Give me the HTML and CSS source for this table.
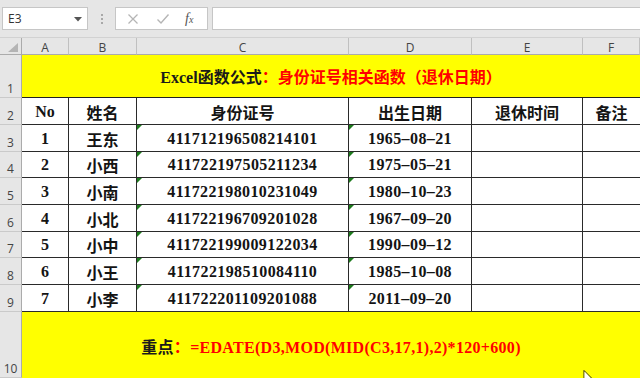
FILE: index.html
```html
<!DOCTYPE html>
<html>
<head>
<meta charset="utf-8">
<link rel="stylesheet" href="styles.css">
</head>
<body>
<div class="app">
  <div class="toolbar">
    <div class="namebox"><span class="nb-text">E3</span><svg class="caret" width="8" height="5" viewBox="0 0 8 5"><polygon points="0,0 8,0 4,4.5" fill="#555"/></svg></div>
    <div class="dots"><i></i><i></i><i></i></div>
    <div class="fxbox">
      <svg width="12" height="12" viewBox="0 0 12 12"><path d="M1.5 1.5 L10.5 10.5 M10.5 1.5 L1.5 10.5" stroke="#b5b5b5" stroke-width="1.3" fill="none"/></svg>
      <svg width="14" height="12" viewBox="0 0 14 12"><path d="M1.5 6.5 L5 10 L12.5 1.5" stroke="#b5b5b5" stroke-width="1.4" fill="none"/></svg>
      <span class="fx"><i>f</i><span class="fxx">x</span></span>
    </div>
    <div class="formula"></div>
  </div>
  <div class="sheet">
    <div class="corner"><svg width="10" height="9" viewBox="0 0 10 9"><polygon points="10,0 10,9 0,9" fill="#b4b4b4"/></svg></div>
    <div class="colh">A</div><div class="colh">B</div><div class="colh">C</div><div class="colh">D</div><div class="colh">E</div><div class="colh">F</div>

    <div class="rowh">1</div>
    <div class="banner title"><span class="blk">Excel函数公式</span><span class="red">：身份证号相关函数（退休日期）</span></div>

    <div class="rowh">2</div>
    <div class="cell">No</div><div class="cell">姓名</div><div class="cell">身份证号</div><div class="cell">出生日期</div><div class="cell">退休时间</div><div class="cell last">备注</div>

    <div class="rowh">3</div>
    <div class="cell">1</div><div class="cell">王东</div><div class="cell tri num">411712196508214101</div><div class="cell tri num">1965–08–21</div><div class="cell"></div><div class="cell last"></div>

    <div class="rowh">4</div>
    <div class="cell">2</div><div class="cell">小西</div><div class="cell tri num">411722197505211234</div><div class="cell tri num">1975–05–21</div><div class="cell"></div><div class="cell last"></div>

    <div class="rowh">5</div>
    <div class="cell">3</div><div class="cell">小南</div><div class="cell tri num">411722198010231049</div><div class="cell tri num">1980–10–23</div><div class="cell"></div><div class="cell last"></div>

    <div class="rowh">6</div>
    <div class="cell">4</div><div class="cell">小北</div><div class="cell tri num">411722196709201028</div><div class="cell tri num">1967–09–20</div><div class="cell"></div><div class="cell last"></div>

    <div class="rowh">7</div>
    <div class="cell">5</div><div class="cell">小中</div><div class="cell tri num">411722199009122034</div><div class="cell tri num">1990–09–12</div><div class="cell"></div><div class="cell last"></div>

    <div class="rowh">8</div>
    <div class="cell">6</div><div class="cell">小王</div><div class="cell tri num">411722198510084110</div><div class="cell tri num">1985–10–08</div><div class="cell"></div><div class="cell last"></div>

    <div class="rowh">9</div>
    <div class="cell">7</div><div class="cell">小李</div><div class="cell tri num">411722201109201088</div><div class="cell tri num">2011–09–20</div><div class="cell"></div><div class="cell last"></div>

    <div class="rowh">10</div>
    <div class="banner note"><span class="blk">重点</span><span class="red">：=EDATE(D3,MOD(MID(C3,17,1),2)*120+600)</span></div>
  </div>
  <svg class="cursor" width="12" height="10" viewBox="0 0 12 10"><path d="M1 0.5 L1 10 M1 0.5 L9 8.5" stroke="#222" stroke-width="1" fill="none"/><polygon points="1.5,1.5 1.5,10 8,8.5" fill="#fff"/></svg>
</div>
</body>
</html>
```

FILE: styles.css
```css
* { box-sizing: border-box; }
html, body { margin: 0; padding: 0; }
body {
  width: 640px;
  height: 378px;
  overflow: hidden;
  background: #ffffff;
  font-family: "Open Sans", "Noto Sans", sans-serif;
}
.app { position: relative; width: 640px; height: 378px; overflow: hidden; }

.toolbar {
  height: 38px;
  background: #e6e6e6;
  border-bottom: 1px solid #d2d2d2;
  display: flex;
  align-items: flex-start;
  padding-top: 7px;
}
.namebox {
  margin-left: 2px;
  width: 86px;
  height: 23px;
  background: #fff;
  border: 1px solid #c6c6c6;
  display: flex;
  align-items: center;
  justify-content: space-between;
  padding: 0 5px 0 5px;
}
.nb-text { font-size: 12px; color: #333; }
.caret { margin-top: 1px; }
.dots {
  width: 27px;
  height: 23px;
  display: flex;
  flex-direction: column;
  align-items: center;
  justify-content: center;
  gap: 2px;
}
.dots i { display: block; width: 2px; height: 2px; background: #a8a8a8; }
.fxbox {
  width: 93px;
  height: 23px;
  background: #fff;
  border: 1px solid #c6c6c6;
  display: flex;
  align-items: center;
  padding-left: 11px;
  gap: 17px;
}
.fx { font-family: "Liberation Serif", serif; color: #555; font-size: 14px; display: flex; align-items: baseline; margin-left: -2px; }
.fx i { font-style: italic; }
.fxx { font-style: italic; font-size: 10px; }
.formula {
  margin-left: 4px;
  flex: 1;
  height: 23px;
  background: #fff;
  border: 1px solid #c6c6c6;
  border-right: none;
}

.sheet {
  display: grid;
  grid-template-columns: 22px 47px 68px 212px 123px 111px 57px;
  grid-template-rows: 17px 43px 27px 27px 26px 27px 27px 26px 27px 27px 66px;
}
.corner {
  background: #e6e6e6;
  border-right: 1px solid #ababab;
  border-bottom: 1px solid #ababab;
  display: flex;
  align-items: flex-end;
  justify-content: flex-end;
  padding: 0 3px 2px 0;
}
.colh {
  background: #e6e6e6;
  border-right: 1px solid #c0c0c0;
  border-bottom: 1px solid #ababab;
  font-size: 12px;
  color: #444;
  display: flex;
  align-items: center;
  justify-content: center;
  padding-top: 3px;
}
.rowh {
  background: #e6e6e6;
  border-right: 1px solid #ababab;
  border-bottom: 1px solid #cacaca;
  font-size: 12px;
  color: #444;
  display: flex;
  align-items: flex-end;
  justify-content: center;
  line-height: 16px;
}
.banner {
  grid-column: 2 / span 6;
  background: #ffff00;
  display: flex;
  align-items: center;
  justify-content: center;
  font-family: "Liberation Serif", "Noto Sans CJK SC", serif;
  font-weight: bold;
  font-size: 16px;
}
.title { border-bottom: 1px solid #222; }
.note { letter-spacing: 0.3px; padding-top: 1px; }
.blk { color: #1a1a1a; }
.red { color: #ff0000; }

.cell {
  position: relative;
  border-right: 1px solid #2a2a2a;
  border-bottom: 1px solid #2a2a2a;
  display: flex;
  align-items: center;
  justify-content: center;
  font-family: "Liberation Serif", "Noto Sans CJK SC", serif;
  font-weight: bold;
  font-size: 16px;
  color: #141414;
  white-space: nowrap;
  padding-top: 1px;
}
.cell.last { border-right: none; }
.num { letter-spacing: 0.4px; }
.tri::before {
  content: "";
  position: absolute;
  left: 0;
  top: 0;
  border-top: 5px solid #1d7a1d;
  border-right: 5px solid transparent;
}
.cursor { position: absolute; left: 583px; top: 370px; }
```
